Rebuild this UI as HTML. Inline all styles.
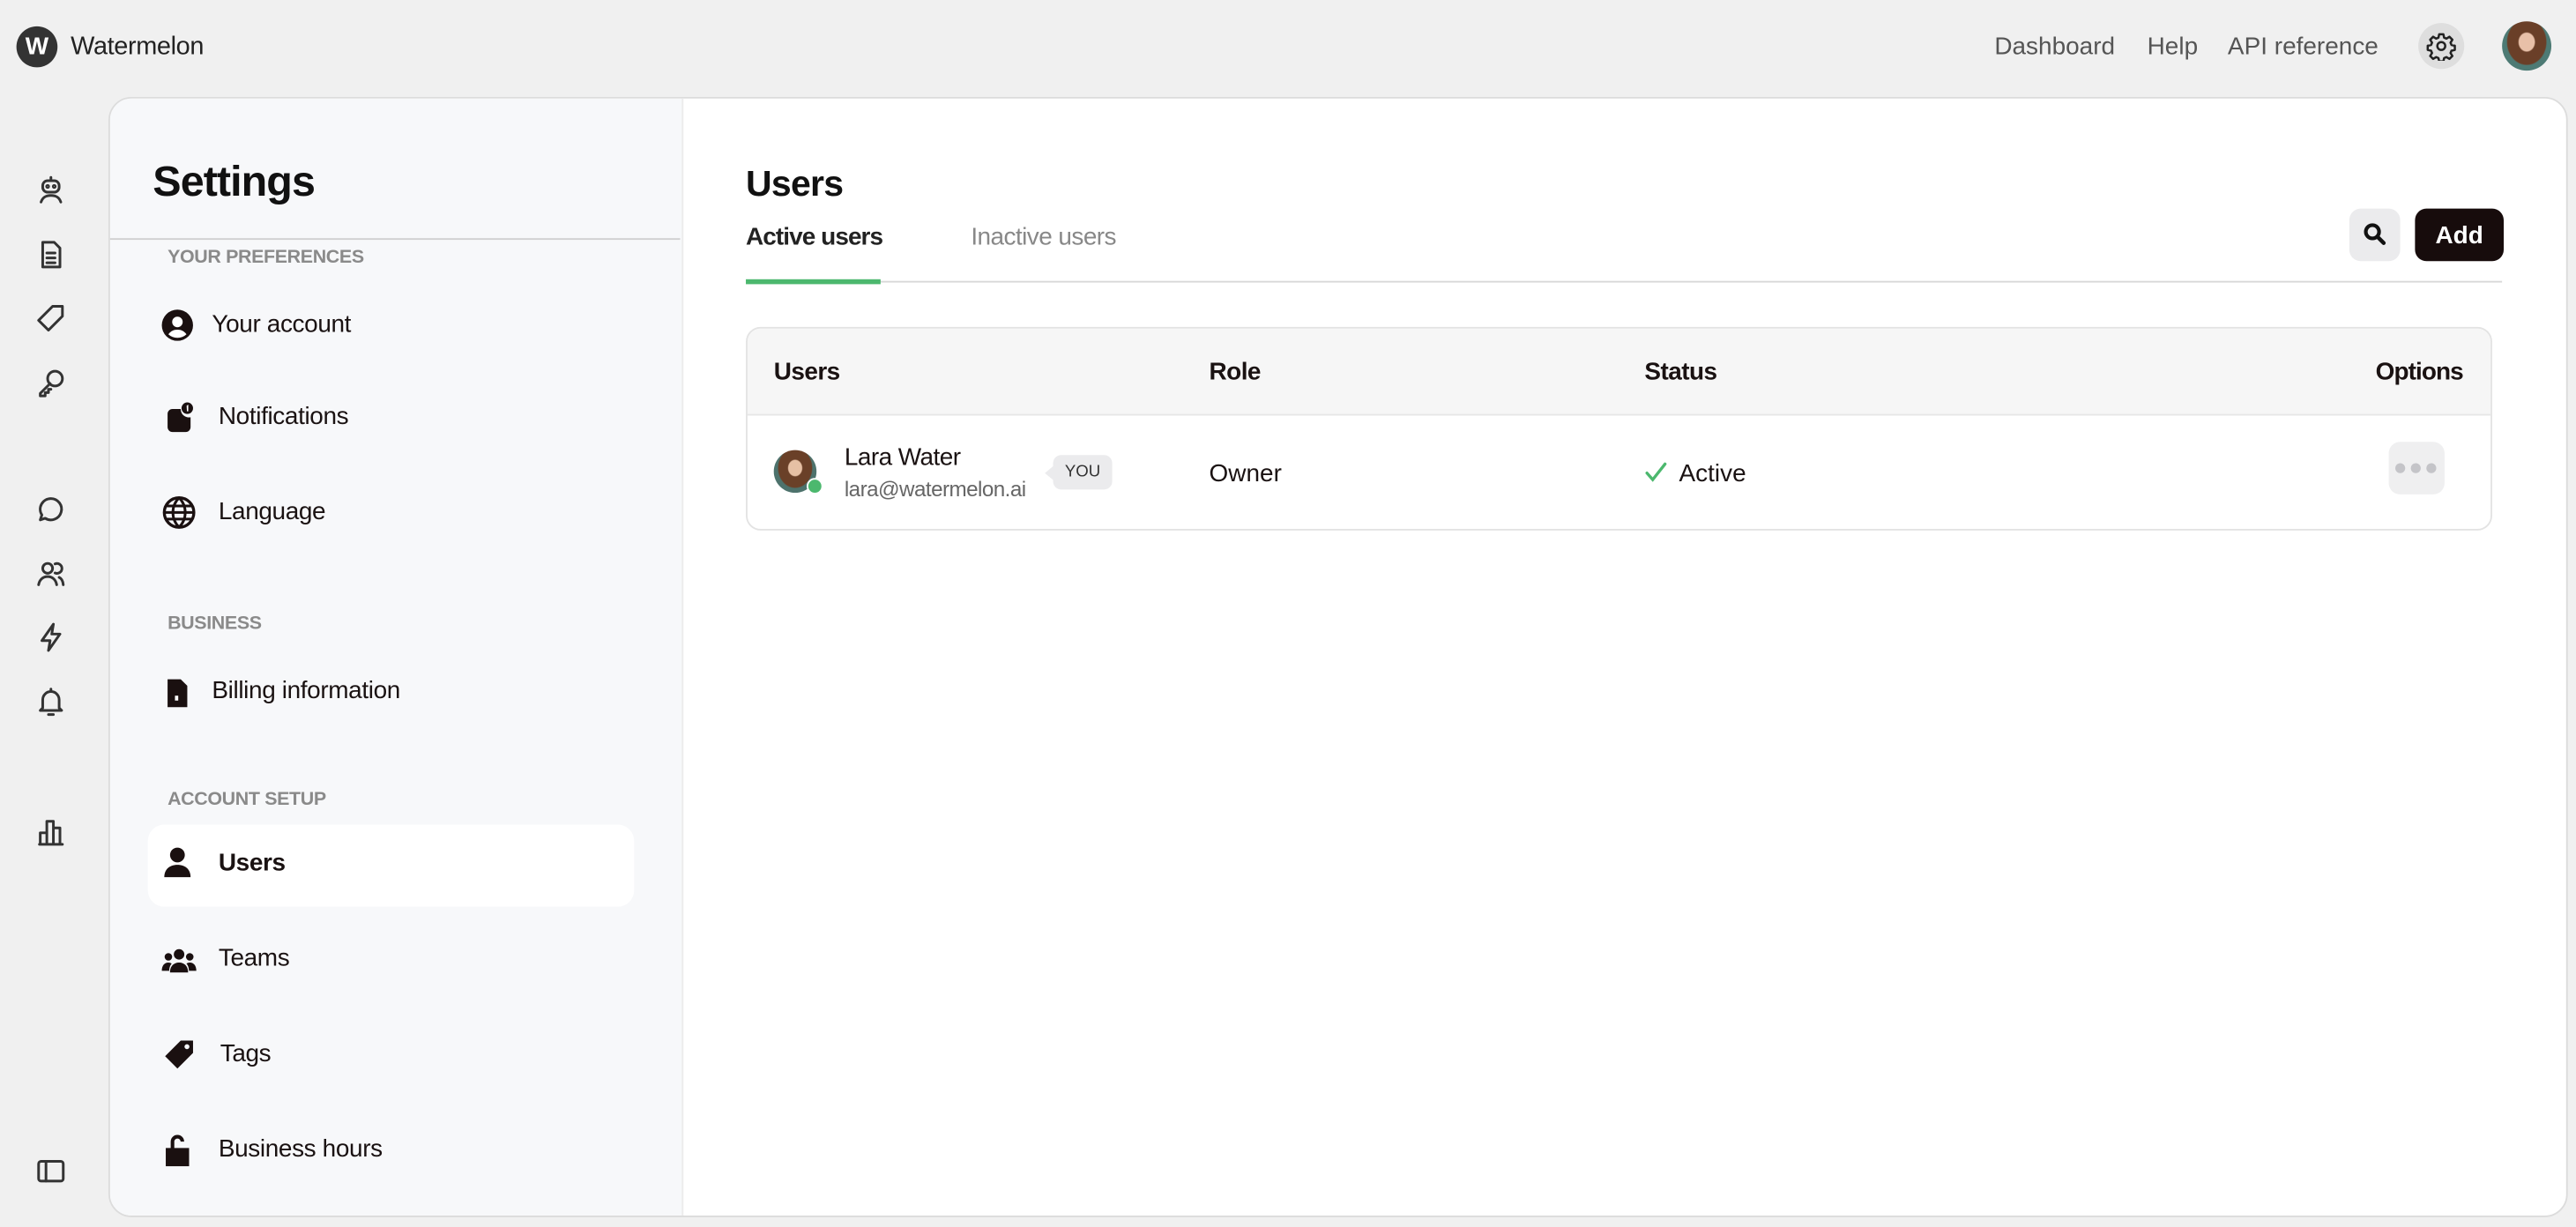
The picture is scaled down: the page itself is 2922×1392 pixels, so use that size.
<!DOCTYPE html>
<html><head><meta charset="utf-8">
<style>
html,body{margin:0;padding:0;width:2922px;height:1392px;overflow:hidden;background:#f0f0f0}
#w{position:absolute;left:0;top:0;width:1568px;height:747px;transform:scale(1.86352);transform-origin:0 0;font-family:"Liberation Sans",sans-serif;color:#1a1212}
.a{position:absolute}
.nav{font-size:15px;color:#555;top:20px}
.ic{position:absolute;left:21px;width:20px;height:20px}
.ic path,.ic circle,.ic rect{fill:none;stroke:#333;stroke-width:1.6;stroke-linecap:round;stroke-linejoin:round}
.sec{position:absolute;left:102px;font-size:11.5px;color:#8a8a8a;font-weight:bold;letter-spacing:-0.2px}
.it{position:absolute;font-size:15px;color:#1a1212;letter-spacing:-0.2px}
.si{position:absolute;width:20px;height:20px}
.si path,.si circle{fill:#1a1010}
</style></head><body><div id="w">
<div class="a" style="left:10px;top:16px;width:25px;height:25px;border-radius:50%;background:#333;color:#fff;font-weight:bold;font-size:15px;text-align:center;line-height:25px">W</div>
<div class="a" style="left:43px;top:20px;font-size:15.5px;color:#222;letter-spacing:-0.2px">Watermelon</div>
<div class="a nav" style="left:1214px">Dashboard</div>
<div class="a nav" style="left:1307px">Help</div>
<div class="a nav" style="left:1356px">API reference</div>
<div class="a" style="left:1472px;top:14px;width:28px;height:28px;border-radius:50%;background:#dedede"></div>
<svg class="a" style="left:1477px;top:19px" width="18" height="18" viewBox="0 0 24 24"><path d="M10.3 2.5h3.4l.6 2.7 1.9.8 2.4-1.5 2.4 2.4-1.5 2.4.8 1.9 2.7.6v3.4l-2.7.6-.8 1.9 1.5 2.4-2.4 2.4-2.4-1.5-1.9.8-.6 2.7h-3.4l-.6-2.7-1.9-.8-2.4 1.5-2.4-2.4 1.5-2.4-.8-1.9-2.7-.6v-3.4l2.7-.6.8-1.9-1.5-2.4 2.4-2.4 2.4 1.5 1.9-.8z" fill="none" stroke="#222" stroke-width="1.8" stroke-linejoin="round"/><circle cx="12" cy="12" r="3.2" fill="none" stroke="#222" stroke-width="1.8"/></svg>
<div class="a" style="left:1523px;top:13px;width:30px;height:30px;border-radius:50%;background:radial-gradient(ellipse at 50% 42%,#e8c0a8 0 22%,#6a3f28 25% 55%,#4d7a74 58%)"></div>
<svg class="ic" style="top:105px" viewBox="0 0 20 20"><rect x="5" y="5" width="10" height="7" rx="3"/><path d="M10 3v2M4 18c1-3 3-4 6-4s5 1 6 4"/><circle cx="8" cy="8.5" r=".6"/><circle cx="12" cy="8.5" r=".6"/></svg>
<svg class="ic" style="top:145px" viewBox="0 0 20 20"><path d="M5 2.5h7l3.5 3.5v11.5h-10.5z M7.5 9h5M7.5 12h5M7.5 15h5"/></svg>
<svg class="ic" style="top:184px" viewBox="0 0 20 20"><path d="M11 2.5h6v6l-8.5 8.5-6-6z"/></svg>
<svg class="ic" style="top:223px" viewBox="0 0 20 20"><circle cx="12.5" cy="7.5" r="4.5"/><path d="M9.5 10.5l-6 6v1.5h3v-2h2v-2h1.5"/></svg>
<svg class="ic" style="top:300px" viewBox="0 0 20 20"><path d="M10 3.5a6.5 6.5 0 1 1-3.5 12l-3 1 1-3A6.5 6.5 0 0 1 10 3.5z"/></svg>
<svg class="ic" style="top:339px" viewBox="0 0 20 20"><circle cx="8" cy="7" r="3"/><path d="M2.5 17c.5-3 2.5-5 5.5-5s5 2 5.5 5M12.5 4.3a3 3 0 1 1 0 5.5M15 12.5c1.5.7 2.3 2.3 2.5 4.5"/></svg>
<svg class="ic" style="top:378px" viewBox="0 0 20 20"><path d="M11.5 2l-7 10h5l-1 6 7-10h-5z"/></svg>
<svg class="ic" style="top:417px" viewBox="0 0 20 20"><path d="M5 14V9a5 5 0 0 1 10 0v5l1.5 1.5h-13zM10 2.5v1.5M8.5 18h3"/></svg>
<svg class="ic" style="top:496px" viewBox="0 0 20 20"><path d="M3 18h14M3.5 18v-7h4v7M7.5 18V4h4v14M11.5 18V8h4v10"/></svg>
<svg class="ic" style="top:703px" viewBox="0 0 20 20"><rect x="2.5" y="4" width="15" height="12" rx="1.5"/><path d="M7 4v12"/></svg>
<div class="a" style="left:66px;top:59px;width:1497px;height:682px;background:#fff;border:1px solid #dcdcdc;border-radius:14px;overflow:hidden;box-sizing:border-box">
 <div class="a" style="left:0;top:0;width:348px;height:682px;background:#f7f8fa;border-right:1px solid #ececec"></div>
</div>
<div class="a" style="left:93px;top:95px;font-size:26px;font-weight:bold;color:#111;letter-spacing:-0.5px">Settings</div>
<div class="a" style="left:67px;top:145px;width:347px;height:1px;background:#d0d0d0"></div>
<div class="sec" style="top:151px">YOUR PREFERENCES</div>
<div class="sec" style="top:374px">BUSINESS</div>
<div class="sec" style="top:481px">ACCOUNT SETUP</div>
<div class="a" style="left:90px;top:502px;width:296px;height:50px;background:#fff;border-radius:10px"></div>
<svg class="si" style="left:98px;top:188px" viewBox="0 0 20 20"><circle cx="10" cy="10" r="9.5"/><circle cx="10" cy="8" r="3.2" style="fill:#fff"/><path d="M4.5 15.5c1.5-2 3.3-2.8 5.5-2.8s4 .8 5.5 2.8a8 8 0 0 1-11 0z" style="fill:#fff"/></svg>
<div class="it" style="left:129px;top:189px">Your account</div>
<svg class="si" style="left:99px;top:245px" viewBox="0 0 20 20"><path d="M3 7a3 3 0 0 1 3-3h5a5 5 0 0 0 6 5v6a3 3 0 0 1-3 3h-8a3 3 0 0 1-3-3z"/><circle cx="15" cy="3.5" r="3.5"/><path d="M14.6 2l1-.6v4h-.8z" style="fill:#fff"/></svg>
<div class="it" style="left:133px;top:245px">Notifications</div>
<svg class="si" style="left:99px;top:302px" viewBox="0 0 20 20"><circle cx="10" cy="10" r="9" style="fill:none;stroke:#1a1010;stroke-width:1.8"/><path d="M1 10h18M10 1c-5 5-5 13 0 18M10 1c5 5 5 13 0 18M2.5 6h15M2.5 14h15" style="fill:none;stroke:#1a1010;stroke-width:1.6"/></svg>
<div class="it" style="left:133px;top:303px">Language</div>
<svg class="si" style="left:98px;top:412px" viewBox="0 0 20 20"><path d="M4 1.5h8l4 4v13h-12z"/><path d="M9.5 10v6M8.5 11.5h2v3h-2z" style="fill:#fff"/></svg>
<div class="it" style="left:129px;top:412px">Billing information</div>
<svg class="si" style="left:98px;top:515px" viewBox="0 0 20 20"><circle cx="10" cy="5.5" r="4.5"/><path d="M2 19c0-5 3.5-7.5 8-7.5s8 2.5 8 7.5z"/></svg>
<div class="it" style="left:133px;top:517px;font-weight:bold">Users</div>
<svg class="si" style="left:98px;top:575px;width:22px" viewBox="0 0 22 20"><circle cx="11" cy="6" r="3.2"/><circle cx="4.5" cy="7.5" r="2.3"/><circle cx="17.5" cy="7.5" r="2.3"/><path d="M5.5 17c0-4 2.5-6 5.5-6s5.5 2 5.5 6zM0.5 16c0-3 1.5-5 4-5 1 0 1.5.3 2 .6-1 1.2-1.5 2.7-1.5 4.4zM21.5 16c0-3-1.5-5-4-5-1 0-1.5.3-2 .6 1 1.2 1.5 2.7 1.5 4.4z"/></svg>
<div class="it" style="left:133px;top:575px">Teams</div>
<svg class="si" style="left:99px;top:632px" viewBox="0 0 20 20"><path d="M11 1.5h7.5v7.5l-9.5 9.5-7.5-7.5z"/><circle cx="14.8" cy="5.2" r="1.5" style="fill:#f7f8fa"/></svg>
<div class="it" style="left:134px;top:633px">Tags</div>
<svg class="si" style="left:98px;top:690px" viewBox="0 0 20 20"><path d="M4 10h12v9h-12zM7 10V5a3 3 0 0 1 6 0" style="fill:none;stroke:#1a1010;stroke-width:2.2"/><path d="M4 10h12v9h-12z"/></svg>
<div class="it" style="left:133px;top:691px">Business hours</div>
<div class="a" style="left:454px;top:99px;font-size:22px;font-weight:bold;color:#111;letter-spacing:-0.4px">Users</div>
<div class="a" style="left:454px;top:136px;font-size:15px;font-weight:bold;color:#222;letter-spacing:-0.5px">Active users</div>
<div class="a" style="left:591px;top:136px;font-size:15px;color:#888;letter-spacing:-0.3px">Inactive users</div>
<div class="a" style="left:454px;top:171px;width:1069px;height:1px;background:#d8d8d8"></div>
<div class="a" style="left:454px;top:170px;width:82px;height:3px;background:#4cb86e"></div>
<div class="a" style="left:1430px;top:127px;width:31px;height:32px;background:#ebebed;border-radius:7px"></div>
<svg class="a" style="left:1438px;top:135px" width="15" height="15" viewBox="0 0 16 16"><circle cx="6.5" cy="6.5" r="4.3" fill="none" stroke="#111" stroke-width="2.4"/><path d="M9.8 9.8l4 4" stroke="#111" stroke-width="2.6" stroke-linecap="round"/></svg>
<div class="a" style="left:1470px;top:127px;width:54px;height:32px;background:#170c0c;border-radius:7px;color:#fff;font-weight:bold;font-size:15px;text-align:center;line-height:33px">Add</div>
<div class="a" style="left:454px;top:199px;width:1063px;height:124px;border:1px solid #e3e3e3;border-radius:9px;box-sizing:border-box;overflow:hidden">
 <div class="a" style="left:0;top:0;width:1063px;height:52px;background:#f6f6f6;border-bottom:1px solid #e6e6e6"></div>
</div>
<div class="a" style="left:471px;top:218px;font-size:15px;font-weight:bold;letter-spacing:-0.3px">Users</div>
<div class="a" style="left:736px;top:218px;font-size:15px;font-weight:bold;letter-spacing:-0.3px">Role</div>
<div class="a" style="left:1001px;top:218px;font-size:15px;font-weight:bold;letter-spacing:-0.3px">Status</div>
<div class="a" style="left:1446px;top:218px;font-size:15px;font-weight:bold;letter-spacing:-0.5px">Options</div>
<div class="a" style="left:471px;top:274px;width:26px;height:26px;border-radius:50%;background:radial-gradient(ellipse at 50% 42%,#e6c0a4 0 22%,#6a4028 25% 55%,#4d726c 58%)"></div>
<div class="a" style="left:491px;top:291px;width:8px;height:8px;border-radius:50%;background:#4cb86e;border:1px solid #fff"></div>
<div class="a" style="left:514px;top:270px;font-size:15px;letter-spacing:-0.3px">Lara Water</div>
<div class="a" style="left:514px;top:290px;font-size:13px;color:#666;letter-spacing:-0.3px">lara@watermelon.ai</div>
<div class="a" style="left:641px;top:277px;width:36px;height:21px;background:#ebebed;border-radius:5px;font-size:10px;text-align:center;line-height:21px;color:#333">YOU</div>
<div class="a" style="left:636px;top:283px;width:0;height:0;border-top:5px solid transparent;border-bottom:5px solid transparent;border-right:6px solid #ebebed"></div>
<div class="a" style="left:736px;top:280px;font-size:15px">Owner</div>
<svg class="a" style="left:1001px;top:281px" width="14" height="13" viewBox="0 0 14 13"><path d="M1.5 7l3.5 4L12.5 1.5" fill="none" stroke="#4cb86e" stroke-width="1.8" stroke-linecap="round"/></svg>
<div class="a" style="left:1022px;top:280px;font-size:15px">Active</div>
<div class="a" style="left:1454px;top:269px;width:34px;height:32px;background:#efeff0;border-radius:7px;text-align:center;line-height:30px;color:#c4c4c8;font-size:14px;letter-spacing:1px">●●●</div>
</div></body></html>
